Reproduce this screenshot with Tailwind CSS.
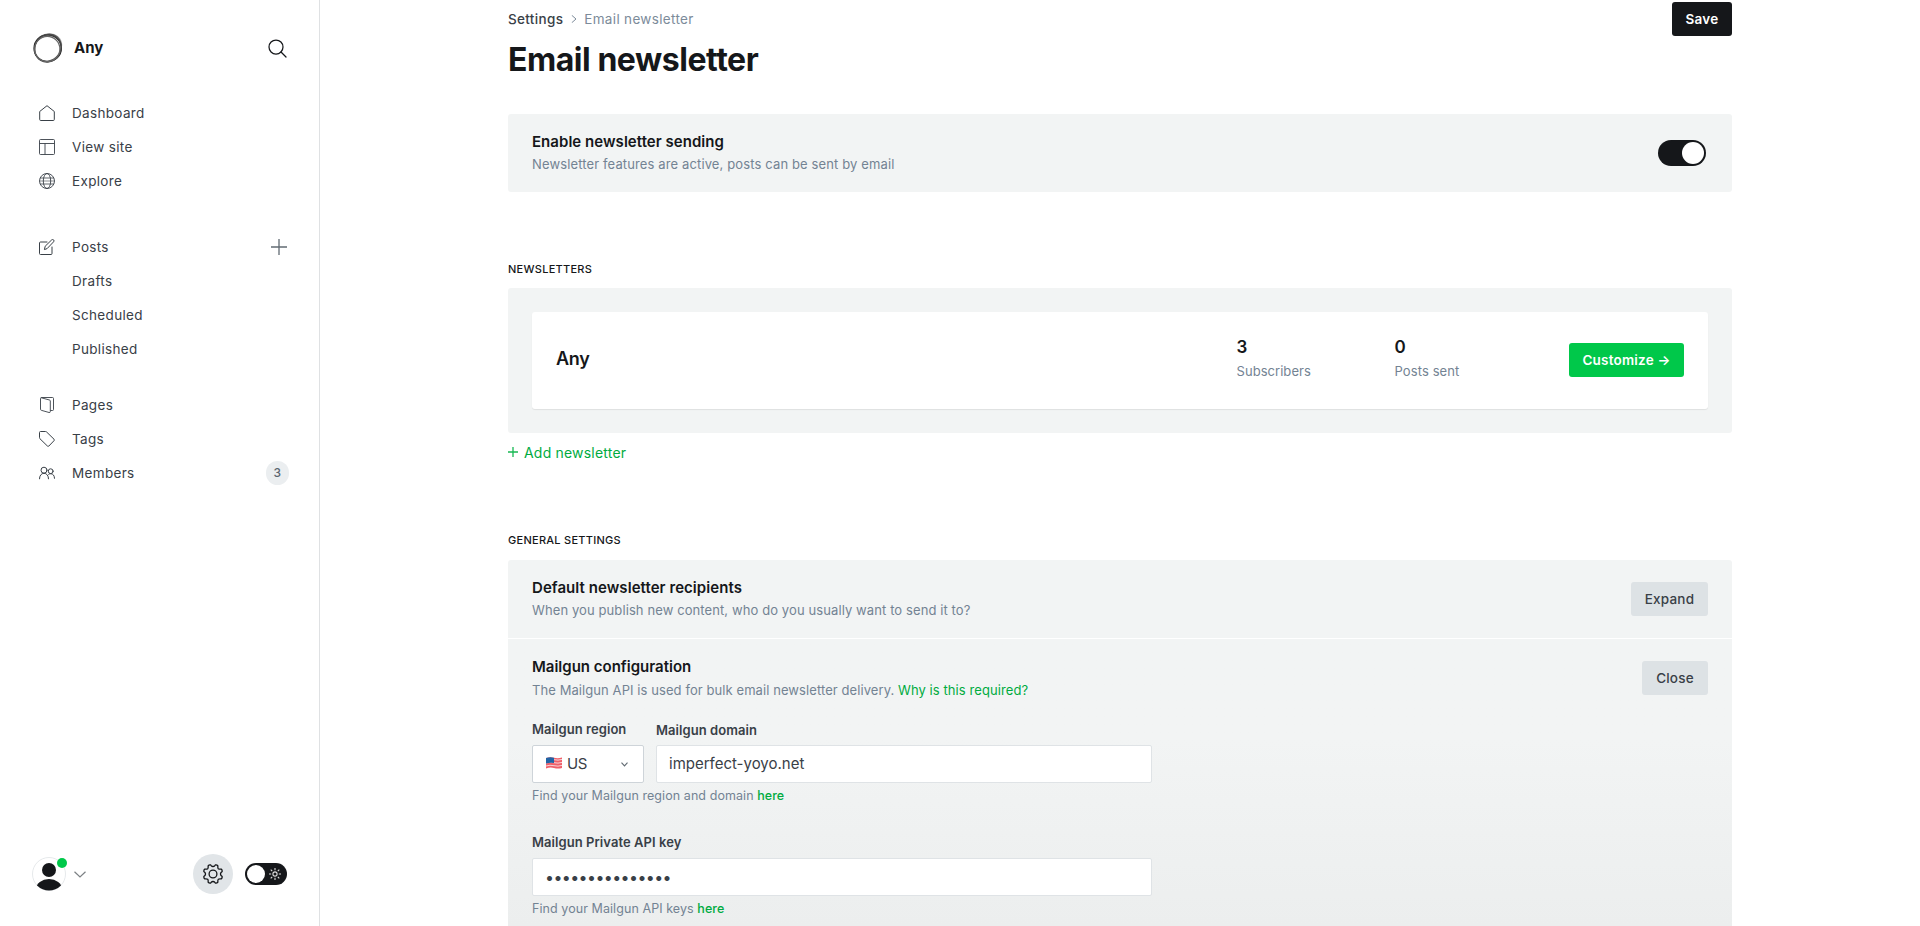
<!DOCTYPE html>
<html lang="en">
<head>
<meta charset="utf-8">
<title>Email newsletter</title>
<script src="https://cdn.jsdelivr.net/npm/@tailwindcss/browser@4"></script>
</head>
<body class="flex h-[926px] w-[1920px] overflow-hidden bg-white font-[Inter,sans-serif] text-[13.5px] tracking-[0.33px] text-[#394047]">
<aside class="flex h-[926px] w-[320px] shrink-0 flex-col border-r border-[#dfe1e3]">
  <header class="mt-8 flex h-8 items-center pl-8 pr-8">
    <svg class="size-8" viewBox="0 0 32 32" fill="none">
      <path d="M7 5C12 .5 20 .2 25 3.500 29 6 30.500 10 30.200 14 28 8.500 22 4.500 15 4.600 11 5 8.500 6.500 6 9z" fill="#bbb" />
      <ellipse cx="15.700" cy="16.200" rx="13.700" ry="13.400" stroke="#222" stroke-width="1.200" />
      <ellipse cx="16.300" cy="15.700" rx="14.200" ry="12.600" stroke="#555" stroke-width="1" transform="rotate(-50 16 16)" />
      <ellipse cx="16" cy="16.400" rx="13" ry="14" stroke="#444" stroke-width="1.200" transform="rotate(30 16 16)" />
      <ellipse cx="15.300" cy="17" rx="12.600" ry="12.600" stroke="#666" stroke-width="1.300" />
    </svg>
    <span class="ml-[10px] text-[15px] font-bold tracking-normal text-[#15171a]">Any</span>
    <svg class="ml-auto size-[19px]" viewBox="0 0 19 19" fill="none" stroke="#15171a" stroke-width="1.25" stroke-linecap="round"><circle cx="8" cy="8" r="7" /><path d="M13 13l5 5" /></svg>
  </header>
  <nav class="mt-8 flex flex-col pl-[39px]">
    <a class="flex h-[34px] items-center gap-[17px]"><svg class="size-4" viewBox="0 0 16 16" fill="none" stroke="#394047" stroke-linejoin="round"><path d="M.7 6.500v8q0 1 1 1h12.600q1 0 1-1v-8L8 .7z" /></svg>Dashboard</a>
    <a class="flex h-[34px] items-center gap-[17px]"><svg class="size-4" viewBox="0 0 16 16" fill="none" stroke="#394047" stroke-width=".9"><rect x=".5" y=".5" width="15" height="15" rx="1" /><path d="M.5 4.500h15M6 4.500v11" /></svg>View site</a>
    <a class="flex h-[34px] items-center gap-[17px]"><svg class="size-4" viewBox="0 0 16 16" fill="none" stroke="#394047" stroke-width=".9"><circle cx="8" cy="8" r="7.500" /><ellipse cx="8" cy="8" rx="3.700" ry="7.500" /><path d="M1 5h14M1 11h14" stroke-width=".8" /><path d="M.5 8h15" stroke-width=".6" /></svg>Explore</a>
    <div class="mt-8 flex h-[34px] items-center gap-[17px] pr-8"><svg class="size-4" viewBox="0 0 16 16" fill="none" stroke="#394047" stroke-linejoin="round" stroke-linecap="round"><path d="M8 3H1.500q-1 0-1 1v10.500q0 1 1 1H12q1 0 1-1V8" /><path d="M5.500 10.200l.7-3L12.700.9q1-.8 1.900 0 .9 1 0 1.900L8.400 9.300z" /></svg>Posts
      <svg class="ml-auto size-4" viewBox="0 0 16 16" stroke="#626b73" stroke-width="1.300"><path d="M8 0v16M0 8h16" /></svg>
    </div>
    <a class="flex h-[34px] items-center pl-[33px]">Drafts</a>
    <a class="flex h-[34px] items-center pl-[33px]">Scheduled</a>
    <a class="flex h-[34px] items-center pl-[33px]">Published</a>
    <a class="mt-[22px] flex h-[34px] items-center gap-[17px]"><svg class="size-4" viewBox="0 0 16 16" fill="none" stroke="#394047" stroke-width=".9" stroke-linejoin="round"><path d="M11.300 13.500h2.200q1 0 1-1V1.500q0-1-1-1h-11q-1 0-1 1v10.800q0 .8.800 1l7.800 2.200q1.200.2 1.200-.8V4q0-.8-.8-1L2 .7" /></svg>Pages</a>
    <a class="flex h-[34px] items-center gap-[17px]"><svg class="size-4" viewBox="0 0 16 16" fill="none" stroke="#394047" stroke-linejoin="round"><path d="M.5 1.500q0-1 1-1h5q.6 0 1 .4l7.500 7.300q.8.8 0 1.500L9.900 15q-.8.800-1.500 0L.9 7.700q-.4-.4-.4-1z" /></svg>Tags</a>
    <div class="flex h-[34px] items-center gap-[17px] pr-[30px]"><svg class="size-4" viewBox="0 0 16 16" fill="none" stroke="#394047" stroke-linecap="round"><circle cx="5" cy="5.200" r="3" /><circle cx="11.700" cy="6.200" r="2.400" /><path d="M.5 13.800c0-3.200 1.800-5.500 4.500-5.500s4.500 2.300 4.500 5.500M9.700 9.300c.6-.4 1.200-.6 2-.6 2.300 0 3.800 1.900 3.800 4.600" /></svg>Members
      <span class="ml-auto flex h-6 w-[23px] items-center justify-center rounded-full bg-[#ebeef0] text-[12px] font-medium text-[#5a6670]">3</span>
    </div>
  </nav>
  <footer class="mb-8 mt-auto flex h-10 items-center pl-8 pr-8">
    <div class="relative size-[34px]">
      <svg class="size-[34px]" viewBox="0 0 34 34"><clipPath id="face"><circle cx="17" cy="17" r="16.500" /></clipPath><circle cx="17" cy="17" r="16.500" fill="#fff" stroke="#e6e9eb" /><g fill="#15171a" clip-path="url(#face)"><circle cx="17" cy="13" r="7" /><ellipse cx="17" cy="32" rx="13" ry="10" /></g></svg>
      <i class="absolute -right-px top-[1px] size-[10px] rounded-full bg-[#00c84a]"></i>
    </div>
    <svg class="ml-2 h-[7px] w-3" viewBox="0 0 12 7" fill="none" stroke="#7c8084" stroke-width="1.200"><path d="M.5.7L6 6l5.500-5.300" /></svg>
    <div class="ml-auto flex size-10 items-center justify-center rounded-full bg-[#e1e5e8]">
      <svg class="size-5" viewBox="0 0 20 20" fill="none" stroke="#15171a" stroke-width="1.300" stroke-linejoin="round" stroke-linecap="round">
        <circle cx="10" cy="10" r="3.900" />
        <path d="M10 2.500Q11.600 2.500 12.300 .9 14 .6 14.900 1.800 14.600 3.900 15.300 4.700 16.200 5.400 18.200 5.100 19.400 6 19.100 7.700 17.500 8.400 17.500 10" />
        <path transform="rotate(90 10 10)" d="M10 2.500Q11.600 2.500 12.300 .9 14 .6 14.900 1.800 14.600 3.900 15.300 4.700 16.200 5.400 18.200 5.100 19.400 6 19.100 7.700 17.500 8.400 17.500 10" />
        <path transform="rotate(180 10 10)" d="M10 2.500Q11.600 2.500 12.300 .9 14 .6 14.900 1.800 14.600 3.900 15.300 4.700 16.200 5.400 18.200 5.100 19.400 6 19.100 7.700 17.500 8.400 17.500 10" />
        <path transform="rotate(270 10 10)" d="M10 2.500Q11.600 2.500 12.300 .9 14 .6 14.900 1.800 14.600 3.900 15.300 4.700 16.200 5.400 18.200 5.100 19.400 6 19.100 7.700 17.500 8.400 17.500 10" />
      </svg>
    </div>
    <div class="ml-3 flex h-[22px] w-[42px] items-center justify-between rounded-full bg-[#15171a] pl-0.5 pr-1.5">
      <i class="size-[18px] rounded-full bg-white"></i>
      <svg class="size-3" viewBox="0 0 12 12" fill="none" stroke="#ddd" stroke-width="1.100"><circle cx="6" cy="6" r="2.100" /><path d="M6 0v2.200M6 9.800v2.200M0 6h2.200M9.800 6h2.200M1.700 1.700l1.500 1.500M8.800 8.800l1.500 1.500M10.300 1.700L8.800 3.200M3.200 8.800l-1.500 1.500" /></svg>
    </div>
  </footer>
</aside>
<main class="ml-[188px] flex h-[926px] w-[1224px] flex-col">
  <header class="flex h-[114px] shrink-0 justify-between">
    <div>
      <div class="mt-[9px] flex h-5 items-center leading-5"><span class="font-medium">Settings</span><svg class="ml-2 mr-[7px] h-2 w-[6px]" viewBox="0 0 6 8" fill="none" stroke="#7c8b9a"><path d="M.8.300L5 4 .8 7.700" /></svg><span class="text-[#7c8b9a]">Email newsletter</span></div>
      <h1 class="mt-[11px] text-[32px] font-bold leading-[39px] tracking-[-0.46px] text-[#15171a]">Email newsletter</h1>
    </div>
    <button class="mt-0.5 h-[34px] w-[60px] rounded-[3px] bg-[#15171a] text-[13.5px] font-semibold tracking-[0.2px] text-white">Save</button>
  </header>
  <section class="flex h-[78px] shrink-0 items-start justify-between rounded-[3px] bg-[#f2f4f4] pl-6 pr-[26px]">
    <div class="pt-[17px]"><h4 class="text-[15px] font-semibold leading-[21px] tracking-[0.04px] text-[#15171a]">Enable newsletter sending</h4><p class="mt-px text-[13px] leading-[22px] tracking-[0.13px] text-[#738393]">Newsletter features are active, posts can be sent by email</p></div>
    <div class="mt-[26px] flex h-[26px] w-12 items-center justify-end rounded-full bg-[#15171a] pr-0.5"><i class="size-[22px] rounded-full bg-white"></i></div>
  </section>
  <h2 class="mt-[68px] h-7 shrink-0 text-[11px] font-medium leading-[18px] tracking-[0.27px] text-[#15171a]">NEWSLETTERS</h2>
  <section class="h-[145px] shrink-0 rounded-[3px] bg-[#f2f4f4] p-6">
    <div class="flex h-[97px] items-start rounded-[3px] bg-white px-6 shadow-[0_1px_1px_rgba(0,0,0,0.08)]">
      <h3 class="flex-1 pt-[34px] text-[18px] font-semibold leading-[26px] tracking-[-0.3px] text-[#15171a]">Any</h3>
      <div class="w-[158px] pt-[23px]"><div class="text-[17px] font-semibold leading-6 text-[#15171a]">3</div><div class="text-[13px] leading-6 tracking-[0.05px] text-[#738393]">Subscribers</div></div>
      <div class="w-[174.5px] pt-[23px]"><div class="text-[17px] font-semibold leading-6 text-[#15171a]">0</div><div class="text-[13px] leading-6 tracking-[0.1px] text-[#738393]">Posts sent</div></div>
      <button class="mt-[31px] h-[34px] w-[115px] rounded-[3px] bg-[#00c84a] text-[13.5px] font-semibold tracking-[0.2px] text-white">Customize →</button>
    </div>
  </section>
  <a class="mt-[8px] flex h-[23px] shrink-0 items-center text-[14px] leading-[21px] tracking-[0.2px] text-[#00ab3f]"><svg class="-mt-px mr-1.5 size-[10px]" viewBox="0 0 10 10" stroke="#18b853" stroke-width="1.300"><path d="M5 0v10M0 5h10" /></svg>Add newsletter</a>
  <h2 class="mt-[67px] h-[29px] shrink-0 text-[11px] font-medium leading-[18px] tracking-[0.27px] text-[#15171a]">GENERAL SETTINGS</h2>
  <section class="flex h-[78px] shrink-0 items-start justify-between rounded-t-[3px] bg-[#f2f4f4] px-6">
    <div class="pt-[17px]"><h4 class="text-[15px] font-semibold leading-[21px] tracking-[0.06px] text-[#15171a]">Default newsletter recipients</h4><p class="mt-px text-[13px] leading-[22px] tracking-[0.1px] text-[#738393]">When you publish new content, who do you usually want to send it to?</p></div>
    <button class="mt-[22px] h-[34px] w-[77px] rounded-[3px] bg-[#dde2e5] text-[13.5px] font-medium tracking-[0.2px]">Expand</button>
  </section>
  <section class="mt-px flex-1 bg-linear-to-b from-[#f2f4f4] from-35% to-[#eceeee] px-6">
    <div class="flex h-[78px] items-start justify-between">
      <div class="pt-[17px]"><h4 class="text-[15px] font-semibold leading-[21px] tracking-normal text-[#15171a]">Mailgun configuration</h4><p class="mt-0.5 text-[13px] leading-[22px] tracking-[0.08px] text-[#738393]">The Mailgun API is used for bulk email newsletter delivery. <a class="text-[#00ab3f]">Why is this required?</a></p></div>
      <button class="mt-[22px] h-[34px] w-[66px] rounded-[3px] bg-[#dde2e5] text-[13.5px] font-medium tracking-[0.2px]">Close</button>
    </div>
    <div class="flex h-[66px] gap-3">
      <div class="flex w-[112px] flex-col justify-between"><label class="mt-[2px] text-[13px] font-semibold leading-[20px] tracking-[0.06px]">Mailgun region</label>
        <div class="flex h-[38px] items-center rounded-[2px] border border-[#ced4d9] bg-white pl-3 pr-[15px] text-[15px] tracking-normal"><svg class="mr-1 -mt-[3px] h-3 w-[18px]" viewBox="0 0 18 12"><path d="M1 1Q5-.300 9 .7T17 .4V11Q13 12 9 11T1 11.500z" fill="#f0606a" /><path d="M1 3q4-1.300 8-.3t8-.3M1 6q4-1.300 8-.3t8-.3M1 9q4-1.300 8-.3t8-.3" fill="none" stroke="#f8d5d8" stroke-width="1" /><path d="M1 1Q5-.300 9 .7V6Q5 5.300 1 6.500z" fill="#2163a5" /></svg><span class="tracking-[-0.5px]">US</span><svg class="ml-auto h-[5px] w-[7px]" viewBox="0 0 7 5" fill="none" stroke="#626b73" stroke-width="1.100"><path d="M.5.600l3 3.300 3-3.300" /></svg></div>
      </div>
      <div class="flex w-[496px] flex-col justify-between"><label class="mt-[3px] text-[13px] font-semibold leading-[20px] tracking-[0.06px]">Mailgun domain</label>
        <div class="flex h-[38px] items-center rounded-[2px] border border-[#dfe3e6] bg-white px-3 text-[15px] tracking-normal">imperfect-yoyo.net</div>
      </div>
    </div>
    <p class="mt-[3px] text-[12.5px] leading-[20px] tracking-[0.07px] text-[#738393]">Find your Mailgun region and domain <a class="font-medium text-[#00ab3f]">here</a></p>
    <label class="mt-[26px] block text-[13px] font-semibold leading-[20px] tracking-[0.06px]">Mailgun Private API key</label>
    <div class="mt-[6px] flex h-[38px] w-[620px] items-center rounded-[2px] border border-[#dfe3e6] bg-white pl-3 text-[16px] tracking-[-0.6px]">•••••••••••••••</div>
    <p class="mt-[3px] text-[12.5px] leading-[20px] tracking-[0.07px] text-[#738393]">Find your Mailgun API keys <a class="font-medium text-[#00ab3f]">here</a></p>
  </section>
</main>
</body>
</html>
